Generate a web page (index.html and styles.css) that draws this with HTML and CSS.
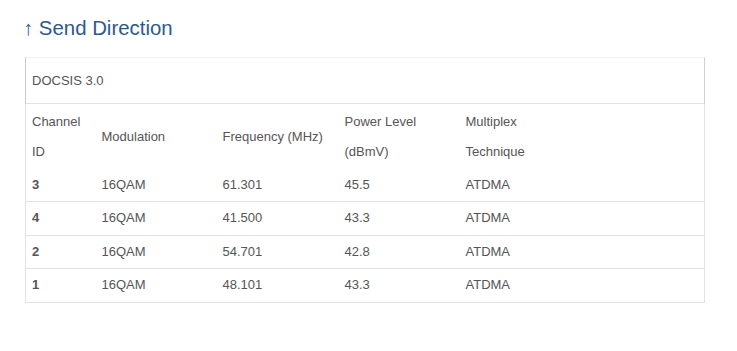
FILE: index.html
```html
<!DOCTYPE html>
<html>
<head>
<meta charset="utf-8">
<link rel="stylesheet" href="styles.css">
</head>
<body>
<h2 class="title">↑ Send Direction</h2>
<div class="panel">
  <div class="panel-head">DOCSIS 3.0</div>
  <table class="grid">
    <colgroup>
      <col class="c1"><col class="c2"><col class="c3"><col class="c4"><col class="c5">
    </colgroup>
    <thead>
      <tr>
        <th>Channel<br>ID</th>
        <th>Modulation</th>
        <th>Frequency (MHz)</th>
        <th>Power Level<br>(dBmV)</th>
        <th>Multiplex<br>Technique</th>
      </tr>
    </thead>
    <tbody>
      <tr><td class="id">3</td><td>16QAM</td><td>61.301</td><td>45.5</td><td>ATDMA</td></tr>
      <tr><td class="id">4</td><td>16QAM</td><td>41.500</td><td>43.3</td><td>ATDMA</td></tr>
      <tr><td class="id">2</td><td>16QAM</td><td>54.701</td><td>42.8</td><td>ATDMA</td></tr>
      <tr><td class="id">1</td><td>16QAM</td><td>48.101</td><td>43.3</td><td>ATDMA</td></tr>
    </tbody>
  </table>
</div>
</body>
</html>
```
FILE: styles.css
```css
html, body {
  margin: 0;
  background: #fff;
}
body {
  padding: 16px 33px 0 23px;
  font-family: "Liberation Sans", Arial, sans-serif;
  color: #555;
  font-size: 13px;
}
.title {
  margin: 0;
  font-size: 20.4px;
  line-height: 24px;
  font-weight: normal;
  color: #2c5a8c;
}
.panel {
  margin: 17px 0 0 2px;
  width: 680px;
}
.panel-head {
  height: 45px;
  line-height: 45px;
  padding: 0 6px;
  border-top: 1px solid #f0f0f0;
  border-left: 1px solid #c8c8c8;
  border-right: 1px solid #d0d0d0;
  border-bottom: 1px solid #e0e0e0;
}
.grid {
  width: 100%;
  border-collapse: collapse;
  border-left: 1px solid #e2e2e2;
  border-right: 1px solid #e2e2e2;
  border-bottom: 1px solid #e2e2e2;
}
.c1 { width: 70px; }
.c2 { width: 121px; }
.c3 { width: 122px; }
.c4 { width: 121px; }
.grid th {
  font-weight: normal;
  text-align: left;
  line-height: 30px;
  padding: 3px 6px 2px 6px;
  vertical-align: middle;
}
.grid td {
  line-height: 20px;
  padding: 6px 6px 6.5px 6px;
}
.grid tbody tr:first-child td {
  padding-bottom: 6px;
}
.grid tbody tr + tr td {
  border-top: 1px solid #e2e2e2;
}
.grid td.id {
  font-weight: bold;
}
```
